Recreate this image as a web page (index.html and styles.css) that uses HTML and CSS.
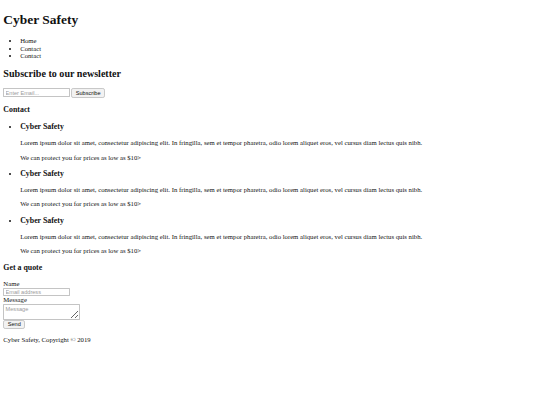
FILE: index.html
```html
<!DOCTYPE html>
<html lang="en">
<head>
<meta charset="utf-8">
<title>Cyber Safety</title>
<link rel="stylesheet" href="styles.css">
</head>
<body>
<header class="site-header">
  <h1>Cyber Safety</h1>
  <nav>
    <ul>
      <li>Home</li>
      <li>Contact</li>
      <li>Contact</li>
    </ul>
  </nav>
</header>
<section class="newsletter">
  <h2>Subscribe to our newsletter</h2>
  <form>
    <input class="field" type="email" placeholder="Enter Email...">
    <button class="btn" type="button">Subscribe</button>
  </form>
</section>
<section class="contact">
  <h3>Contact</h3>
  <ul>
    <li>
      <h3>Cyber Safety</h3>
      <p>Lorem ipsum dolor sit amet, consectetur adipiscing elit. In fringilla, sem et tempor pharetra, odio lorem aliquet eros, vel cursus diam lectus quis nibh.</p>
      <p>We can protect you for prices as low as $10&gt;</p>
    </li>
    <li>
      <h3>Cyber Safety</h3>
      <p>Lorem ipsum dolor sit amet, consectetur adipiscing elit. In fringilla, sem et tempor pharetra, odio lorem aliquet eros, vel cursus diam lectus quis nibh.</p>
      <p>We can protect you for prices as low as $10&gt;</p>
    </li>
    <li>
      <h3>Cyber Safety</h3>
      <p>Lorem ipsum dolor sit amet, consectetur adipiscing elit. In fringilla, sem et tempor pharetra, odio lorem aliquet eros, vel cursus diam lectus quis nibh.</p>
      <p>We can protect you for prices as low as $10&gt;</p>
    </li>
  </ul>
</section>
<section class="quote">
  <h3>Get a quote</h3>
  <form>
    <label>Name</label><br>
    <input class="field" type="text" placeholder="Email address"><br>
    <label>Message</label><br>
    <textarea class="area" placeholder="Message"></textarea><br>
    <button class="btn" type="button">Send</button>
  </form>
</section>
<footer>
  <p>Cyber Safety, Copyright © 2019</p>
</footer>
</body>
</html>
```
FILE: styles.css
```css
html {
  zoom: 0.42;
  font-family: "Liberation Serif", "Times New Roman", serif;
  line-height: 1.15;
  color: #111;
}
.field,
.area,
.btn {
  font-family: "Liberation Sans", Arial, sans-serif;
  font-size: 13.33px;
  box-sizing: border-box;
  vertical-align: top;
  margin: 0;
}
.field {
  width: 158px;
  height: 21px;
  padding: 1px 3px;
  border: 2px solid #c4c4c4;
  border-radius: 1px;
}
.area {
  width: 183px;
  height: 37px;
  padding: 2px 3px;
  border: 2px solid #c4c4c4;
  border-radius: 1px;
}
.field::placeholder,
.area::placeholder {
  color: #9a9a9a;
}
.btn {
  height: 22px;
  padding: 1px 8px;
  background: #f2f2f2;
  border: 2px solid #c8c8c8;
  border-radius: 5px;
  color: #111;
}
```
